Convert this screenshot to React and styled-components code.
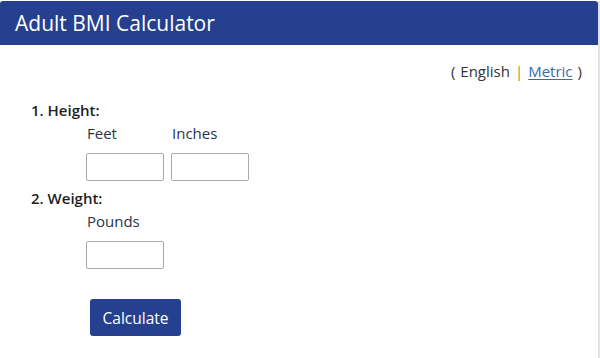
import React from 'react'
import styled, { createGlobalStyle } from 'styled-components'

const BLUE = '#25408f'

const Global = createGlobalStyle`
  html, body { margin: 0; padding: 0; background: #fff; }
  body { font-family: "Open Sans", "Noto Sans", sans-serif; }
`

const Card = styled.div`
  width: 598px;
  height: 358px;
  border-right: 2px solid #e2e2e2;
  box-sizing: content-box;
`

const Header = styled.div`
  height: 44px;
  margin-top: 1px;
  background: ${BLUE};
  border-radius: 3px 3px 0 0;
  display: flex;
  align-items: center;
  padding-left: 15px;
  color: #fff;
  font-size: 21px;
`

const Body = styled.div`
  padding: 16px 16px 0 31px;
`

const Units = styled.div`
  display: flex;
  justify-content: flex-end;
  gap: 5px;
  font-size: 15px;
  color: #333;
  line-height: 20px;
`

const Pipe = styled.span`
  color: #b8862e;
`

const UnitLink = styled.a`
  color: #3b6aa8;
  text-decoration: underline;
  text-underline-offset: 2px;
`

const Section = styled.div`
  margin-top: ${p => p.$top || 0}px;
`

const Heading = styled.div`
  font-size: 15px;
  font-weight: 600;
  color: #1e1e1e;
  line-height: 20px;
`

const Fields = styled.div`
  display: flex;
  gap: 7px;
  padding-left: 55px;
  margin-top: 3px;
`

const Field = styled.label`
  display: flex;
  flex-direction: column;
  gap: 10px;
  width: 77px;
  font-size: 15px;
  color: #2a3347;
  line-height: 20px;
  padding-left: 1px;
`

const Input = styled.input`
  width: 78px;
  height: 28px;
  box-sizing: border-box;
  margin-left: -1px;
  border: 1px solid #a9a9a9;
  border-radius: 2px;
  background: #fff;
`

const Button = styled.button`
  margin: 30px 0 0 59px;
  width: 91px;
  height: 37px;
  background: ${BLUE};
  color: #fff;
  border: none;
  border-radius: 3px;
  font-family: "Open Sans", sans-serif;
  font-size: 15.5px;
  cursor: pointer;
`

export default function App() {
  return (
    <>
      <Global />
      <Card>
        <Header>Adult BMI Calculator</Header>
        <Body>
          <Units>
            <span>(</span>
            <span>English</span>
            <Pipe>|</Pipe>
            <UnitLink href="#">Metric</UnitLink>
            <span>)</span>
          </Units>
          <Section $top={19}>
            <Heading>1. Height:</Heading>
            <Fields>
              <Field>Feet<Input /></Field>
              <Field>Inches<Input /></Field>
            </Fields>
          </Section>
          <Section $top={7}>
            <Heading>2. Weight:</Heading>
            <Fields>
              <Field>Pounds<Input /></Field>
            </Fields>
          </Section>
          <Button>Calculate</Button>
        </Body>
      </Card>
    </>
  )
}
